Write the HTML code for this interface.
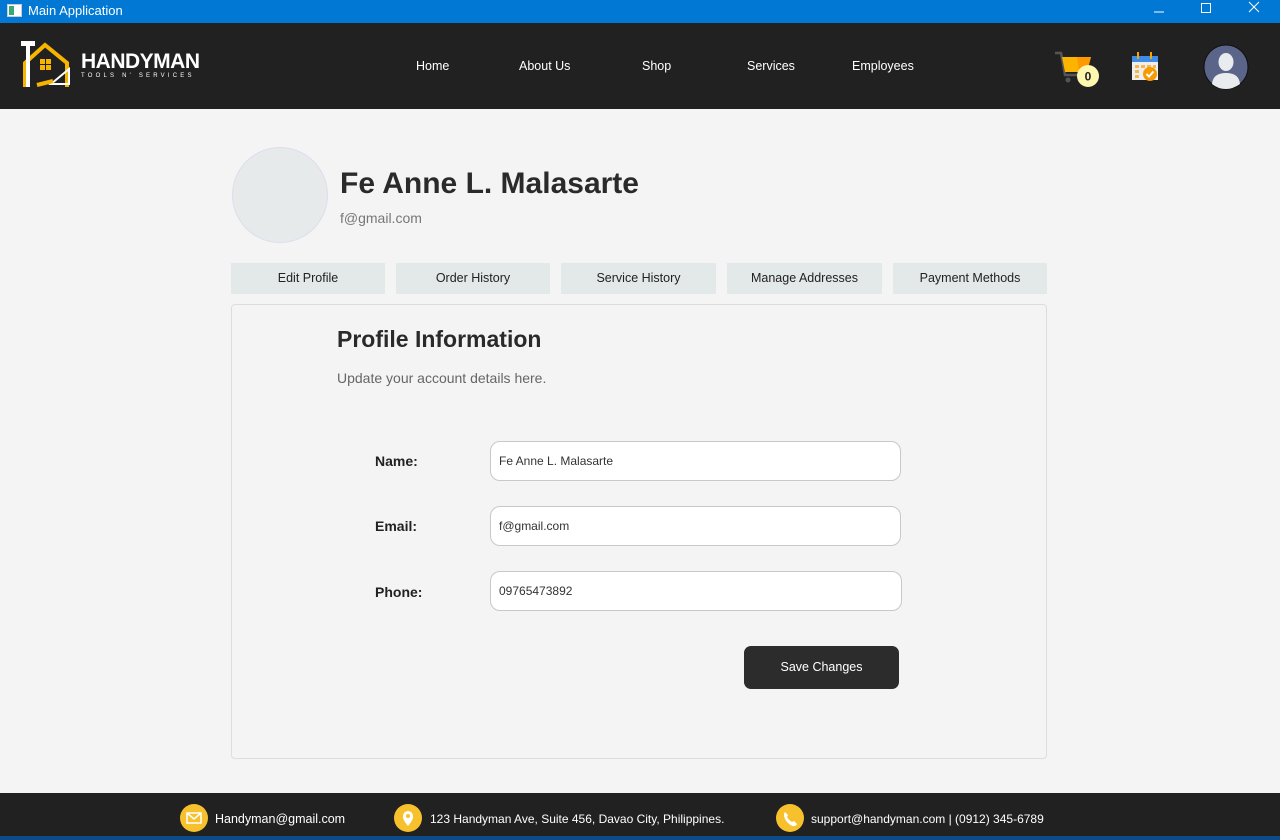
<!DOCTYPE html>
<html><head><meta charset="utf-8">
<style>
*{box-sizing:border-box;margin:0;padding:0}
body{width:1280px;height:840px;overflow:hidden;background:#f4f4f4;font-family:"Liberation Sans",sans-serif;position:relative;color:#222}
.title{position:absolute;left:0;top:0;width:1280px;height:23px;background:#0078d4;color:#fff;font-size:13px}
.title span{position:absolute;left:28px;top:3px}
.hdr{position:absolute;left:0;top:23px;width:1280px;height:86px;background:#212121}
.nav{position:absolute;top:36px;color:#fff;font-size:12.5px}
.btn{position:absolute;top:263px;height:31px;width:154px;background:#e3e8e8;font-size:12.5px;text-align:center;line-height:31px;color:#222}
.card{position:absolute;left:231px;top:304px;width:816px;height:455px;border:1px solid #ddd;border-radius:4px;background:#f4f4f4}
.lbl{position:absolute;left:375px;font-size:14px;font-weight:bold;color:#222}
.inp{position:absolute;left:490px;width:411px;height:40px;border:1px solid #c8c8c8;border-radius:10px;background:#fff;font-size:12px;padding-left:8px;line-height:38px;color:#333}
.ftr{position:absolute;left:0;top:793px;width:1280px;height:43px;background:#212121;color:#fff;font-size:12.5px}
.ftr span{position:absolute;top:19px}
.ic{position:absolute;top:11px;width:28px;height:28px;border-radius:50%;background:#f7c12e}
</style></head><body>
<div class="title">
<svg style="position:absolute;left:7px;top:4px" width="15" height="13"><rect x="0.5" y="0.5" width="14" height="12" fill="#fff" stroke="#ccc"/><rect x="2" y="2" width="5" height="9" fill="#3a7"/></svg>
<span>Main Application</span>
<svg style="position:absolute;left:1153px;top:6px" width="12" height="12"><line x1="1" y1="6" x2="11" y2="6" stroke="#fff"/></svg>
<svg style="position:absolute;left:1200px;top:2px" width="12" height="12"><rect x="1.5" y="1.5" width="9" height="9" fill="none" stroke="#fff"/></svg>
<svg style="position:absolute;left:1248px;top:1px" width="12" height="12"><path d="M1 1L11 11M11 1L1 11" stroke="#fff"/></svg>
</div>
<div class="hdr">
<svg style="position:absolute;left:17px;top:14px" width="60" height="56" viewBox="0 0 60 56">
<path d="M8 50V26L28 8L50 26V50" fill="none" stroke="#f7b500" stroke-width="4"/>
<rect x="4" y="4" width="14" height="5" fill="#fff"/><rect x="9" y="8" width="4" height="42" fill="#fff"/>
<rect x="23" y="22" width="5" height="5" fill="#f7b500"/><rect x="29" y="22" width="5" height="5" fill="#f7b500"/><rect x="23" y="28" width="5" height="5" fill="#f7b500"/><rect x="29" y="28" width="5" height="5" fill="#f7b500"/>
<path d="M34 47L52 32V47Z" fill="none" stroke="#fff" stroke-width="2"/>
<path d="M20 48L36 44" stroke="#f7b500" stroke-width="4"/>
</svg>
<div style="position:absolute;left:81px;top:27px;color:#fff;font-weight:bold;font-size:21px;letter-spacing:-0.5px">HANDYMAN</div>
<div style="position:absolute;left:81px;top:50px;color:#fff;font-size:6px;letter-spacing:3.2px">TOOLS N' SERVICES</div>
<div class="nav" style="left:416px">Home</div>
<div class="nav" style="left:519px">About Us</div>
<div class="nav" style="left:642px">Shop</div>
<div class="nav" style="left:747px">Services</div>
<div class="nav" style="left:852px">Employees</div>
<svg style="position:absolute;left:1053px;top:26px" width="50" height="40">
<path d="M2 4H8L12 26H32" fill="none" stroke="#555" stroke-width="2.5"/>
<path d="M9 8H38L34 23H12Z" fill="#fdb400"/><path d="M24 8H38L34 23H26Z" fill="#fd9a00"/>
<circle cx="15" cy="31" r="2.5" fill="#555"/>
<circle cx="35" cy="27" r="11" fill="#fdf7b0"/>
<text x="35" y="31.5" font-size="12" font-weight="bold" text-anchor="middle" fill="#222" font-family="Liberation Sans">0</text>
</svg>
<svg style="position:absolute;left:1131px;top:28px" width="30" height="32">
<rect x="1" y="5" width="26" height="24" fill="#eee"/><rect x="1" y="5" width="26" height="6" fill="#3e8be8"/>
<rect x="6" y="1" width="2" height="7" fill="#f7a300"/><rect x="19" y="1" width="2" height="7" fill="#f7a300"/>
<g fill="#f7b54a"><rect x="4" y="14" width="4" height="3"/><rect x="10" y="14" width="4" height="3"/><rect x="16" y="14" width="4" height="3"/><rect x="22" y="14" width="3" height="3"/><rect x="4" y="19" width="4" height="3"/><rect x="4" y="24" width="4" height="3"/></g>
<circle cx="19" cy="23" r="7" fill="#f79a00"/><path d="M15.5 23L18 25.5L22.5 20.5" fill="none" stroke="#fff" stroke-width="2"/>
</svg>
<svg style="position:absolute;left:1203px;top:21px" width="46" height="46">
<circle cx="23" cy="23" r="22" fill="#5b6589" stroke="#111" stroke-width="1"/>
<ellipse cx="23" cy="18" rx="7.5" ry="9" fill="#e9ecef"/>
<path d="M9 40Q10 29 23 29Q36 29 37 40Q30 45 23 45Q15 45 9 40Z" fill="#e9ecef"/>
</svg>
</div>
<div style="position:absolute;left:232px;top:147px;width:96px;height:96px;border-radius:50%;background:#e6eaea;border:1px solid #dde"></div>
<div style="position:absolute;left:340px;top:167px;font-size:30px;font-weight:bold;color:#2a2a2a">Fe Anne L. Malasarte</div>
<div style="position:absolute;left:340px;top:210px;font-size:14px;color:#777">f@gmail.com</div>
<div class="btn" style="left:231px">Edit Profile</div>
<div class="btn" style="left:396px">Order History</div>
<div class="btn" style="left:561px;width:155px">Service History</div>
<div class="btn" style="left:727px;width:155px">Manage Addresses</div>
<div class="btn" style="left:893px">Payment Methods</div>
<div class="card"></div>
<div style="position:absolute;left:337px;top:326px;font-size:23px;font-weight:bold;color:#2a2a2a">Profile Information</div>
<div style="position:absolute;left:337px;top:370px;font-size:14px;color:#666">Update your account details here.</div>
<div class="lbl" style="top:453px">Name:</div>
<div class="inp" style="top:441px">Fe Anne L. Malasarte</div>
<div class="lbl" style="top:518px">Email:</div>
<div class="inp" style="top:506px">f@gmail.com</div>
<div class="lbl" style="top:584px">Phone:</div>
<div class="inp" style="top:571px;width:412px">09765473892</div>
<div style="position:absolute;left:744px;top:646px;width:155px;height:43px;background:#2c2c2c;border-radius:7px;color:#fff;font-size:12.5px;text-align:center;line-height:43px">Save Changes</div>
<div class="ftr">
<div class="ic" style="left:180px"><svg width="28" height="28"><rect x="7" y="9" width="14" height="10" fill="none" stroke="#fff" stroke-width="1.5"/><path d="M7 9L14 15L21 9" fill="none" stroke="#fff" stroke-width="1.5"/></svg></div>
<span style="left:215px">Handyman@gmail.com</span>
<div class="ic" style="left:394px"><svg width="28" height="28"><path d="M14 22C9 16 9 14 9 12A5 5 0 0 1 19 12C19 14 19 16 14 22Z" fill="#fff"/><circle cx="14" cy="12" r="2" fill="#f7c12e"/></svg></div>
<span style="left:430px;font-size:12px">123 Handyman Ave, Suite 456, Davao City, Philippines.</span>
<div class="ic" style="left:776px"><svg width="28" height="28"><path d="M9 8C7 10 8 15 12 19C16 23 20 23 21 20L18 17L16 18C14 17 12 15 11 13L12 11Z" fill="#fff"/></svg></div>
<span style="left:811px;font-size:12px">support@handyman.com | (0912) 345-6789</span>
</div>
<div style="position:absolute;left:0;top:836px;width:1280px;height:4px;background:#0c4a8a"></div>
</body></html>
